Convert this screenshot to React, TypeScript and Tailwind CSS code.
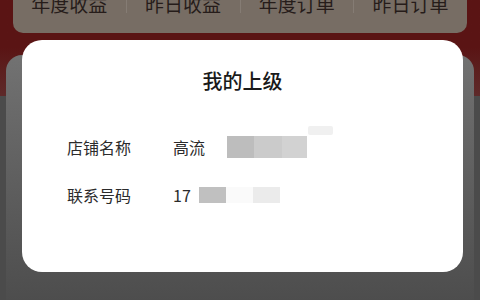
import React from 'react'

const tabs = ['年度收益', '昨日收益', '年度订单', '昨日订单']

export default function App() {
  return (
    <div
      className="relative w-[480px] h-[300px] overflow-hidden bg-[#4b4b4b]"
      style={{ fontFamily: '"Noto Sans CJK SC", "Noto Sans", sans-serif' }}
    >
      {/* page behind the dim overlay */}
      <div className="h-[96px] bg-gradient-to-b from-[#5a1414] via-[#5a1414] to-[#5e2a2a] px-[13px]">
        <div className="flex h-[33px] items-end rounded-b-[10px] bg-[#776d64] pb-[20px]">
          {tabs.map((t, i) => (
            <div
              key={t}
              className={
                'flex flex-1 justify-center text-[19px] leading-none text-[#261c1a] ' +
                (i > 0 ? 'border-l border-[#857c74]' : '')
              }
            >
              {t}
            </div>
          ))}
        </div>
      </div>
      <div className="mx-[6px] -mt-[41px] h-[260px] rounded-t-[16px] bg-gradient-to-b from-[#727272] to-[#4b4b4b]" />

      {/* dialog */}
      <div className="absolute left-[22px] top-[40px] w-[441px] h-[232px] rounded-[20px] bg-white">
        <div className="pt-[27px] text-center text-[20px] leading-[28px] font-medium text-[#1a1a1a]">
          我的上级
        </div>
        <div className="mt-[40px] flex items-center pl-[45px] text-[16px] leading-[24px] text-[#2b2b2b]">
          <span className="w-[106px]">店铺名称</span>
          <span>高流</span>
          <div className="relative ml-[22px] flex h-[22px]">
            <div className="w-[27px] bg-[#bdbdbd]" />
            <div className="w-[28px] bg-[#cbcbcb]" />
            <div className="w-[25px] bg-[#d2d2d2]" />
            <div className="absolute left-[81px] -top-[10px] h-[9px] w-[25px] rounded-[2px] bg-[#f0f0f0]" />
          </div>
        </div>
        <div className="mt-[24px] flex items-center pl-[45px] text-[16px] leading-[24px] text-[#2b2b2b]">
          <span className="w-[106px]">联系号码</span>
          <span>17</span>
          <div className="ml-[8px] flex h-[16px]">
            <div className="w-[27px] bg-[#c0c0c0]" />
            <div className="w-[27px] bg-[#fafafa]" />
            <div className="w-[27px] bg-[#ebebeb]" />
          </div>
        </div>
      </div>
    </div>
  )
}
